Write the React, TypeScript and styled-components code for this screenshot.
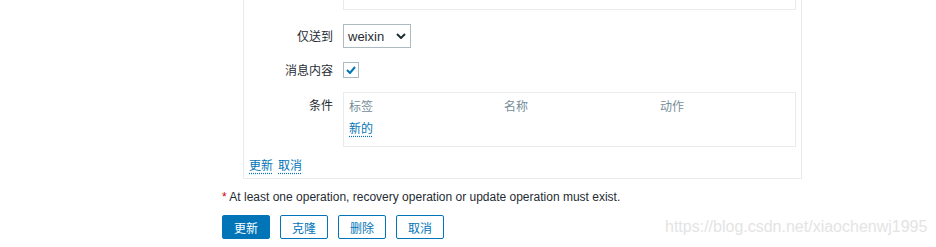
import styled, { createGlobalStyle } from "styled-components";

const GlobalStyle = createGlobalStyle`
	html, body {
		margin: 0;
		padding: 0;
		background: #ffffff;
	}
	body {
		font-family: "Liberation Sans", Arial, "Noto Sans CJK SC", sans-serif;
		font-size: 12px;
		color: #1f2c33;
	}
`;

const columns = ["标签", "名称", "动作"];
const actions = ["克隆", "删除", "取消"];

export default function App() {
	return (
		<>
			<GlobalStyle />
			<Page>
				<Panel>
					<FormGrid>
						<span />
						<PrevField />

						<Label>仅送到</Label>
						<Select>
							<span>weixin</span>
							<svg width="10" height="6" viewBox="0 0 10 6">
								<path d="M1 1l4 4 4-4" fill="none" stroke="#1f2c33" strokeWidth="2" />
							</svg>
						</Select>

						<Label>消息内容</Label>
						<Checkbox>
							<svg width="10" height="8" viewBox="0 0 10 8">
								<path d="M1 4l3 3 5-6" fill="none" stroke="#0275b8" strokeWidth="2" />
							</svg>
						</Checkbox>

						<Label $top>条件</Label>
						<Conditions>
							<HeadRow>
								{columns.map((c) => (
									<span key={c}>{c}</span>
								))}
							</HeadRow>
							<LinkRow>
								<Link>新的</Link>
							</LinkRow>
						</Conditions>
					</FormGrid>
					<Links>
						<Link>更新</Link>
						<Link>取消</Link>
					</Links>
				</Panel>
				<Note>
					<Star>*</Star> At least one operation, recovery operation or update operation must
					exist.
				</Note>
				<Buttons>
					<Button $primary>更新</Button>
					{actions.map((a) => (
						<Button key={a}>{a}</Button>
					))}
				</Buttons>
				<Watermark>https://blog.csdn.net/xiaochenwj1995</Watermark>
			</Page>
		</>
	);
}

const Page = styled.div`
	position: relative;
	height: 247px;
	padding-left: 222px;
	overflow: hidden;
`;
const Panel = styled.div`
	width: 559px;
	margin-left: 21px;
	border: 1px solid #e9ecee;
	border-top: none;
	padding: 0 5px 5px 0;
	box-sizing: border-box;
`;
const FormGrid = styled.div`
	display: grid;
	grid-template-columns: 89px 1fr;
	column-gap: 10px;
	row-gap: 14px;
	align-items: center;
`;
const PrevField = styled.div`
	height: 10px;
	box-sizing: border-box;
	border: 1px solid #e9ecee;
	border-top: none;
`;
const Label = styled.div<{ $top?: boolean }>`
	text-align: right;
	line-height: 14px;
	font-family: "Noto Sans CJK SC", sans-serif;
	align-self: ${(p) => (p.$top ? "start" : "center")};
	padding-top: ${(p) => (p.$top ? "6px" : "0")};
`;
const Select = styled.div`
	width: 68px;
	height: 24px;
	box-sizing: border-box;
	border: 1px solid #acbbc2;
	display: flex;
	align-items: center;
	justify-content: space-between;
	padding: 0 4px;
	font-size: 13px;
`;
const Checkbox = styled.div`
	width: 16px;
	height: 16px;
	box-sizing: border-box;
	border: 1px solid #acbbc2;
	display: flex;
	align-items: center;
	justify-content: center;
`;
const Conditions = styled.div`
	border: 1px solid #e9ecee;
	padding: 4px 5px 9px;
	font-family: "Noto Sans CJK SC", sans-serif;
`;
const HeadRow = styled.div`
	display: grid;
	grid-template-columns: 155px 156px 1fr;
	height: 18px;
	line-height: 18px;
	color: #768d99;
	margin-bottom: 4px;
`;
const LinkRow = styled.div`
	height: 18px;
	line-height: 18px;
`;
const Link = styled.span`
	color: #0275b8;
	font-family: "Noto Sans CJK SC", sans-serif;
	text-decoration: underline dotted;
	text-underline-offset: 3px;
	cursor: pointer;
`;
const Links = styled.div`
	display: flex;
	gap: 5px;
	margin-top: 10px;
	padding-left: 5px;
	height: 16px;
	line-height: 16px;
`;
const Note = styled.div`
	margin-top: 10px;
	line-height: 16px;
`;
const Star = styled.span`
	color: #d40000;
`;
const Buttons = styled.div`
	display: flex;
	gap: 10px;
	margin-top: 10px;
`;
const Button = styled.div<{ $primary?: boolean }>`
	width: 48px;
	height: 24px;
	box-sizing: border-box;
	border: 1px solid #0275b8;
	border-radius: 2px;
	background: ${(p) => (p.$primary ? "#0275b8" : "#ffffff")};
	color: ${(p) => (p.$primary ? "#ffffff" : "#0275b8")};
	font-family: "Noto Sans CJK SC", sans-serif;
	display: flex;
	align-items: center;
	justify-content: center;
	cursor: pointer;
`;
const Watermark = styled.div`
	position: absolute;
	left: 665px;
	top: 218px;
	font-size: 16px;
	color: #e4e4e4;
	white-space: nowrap;
`;
